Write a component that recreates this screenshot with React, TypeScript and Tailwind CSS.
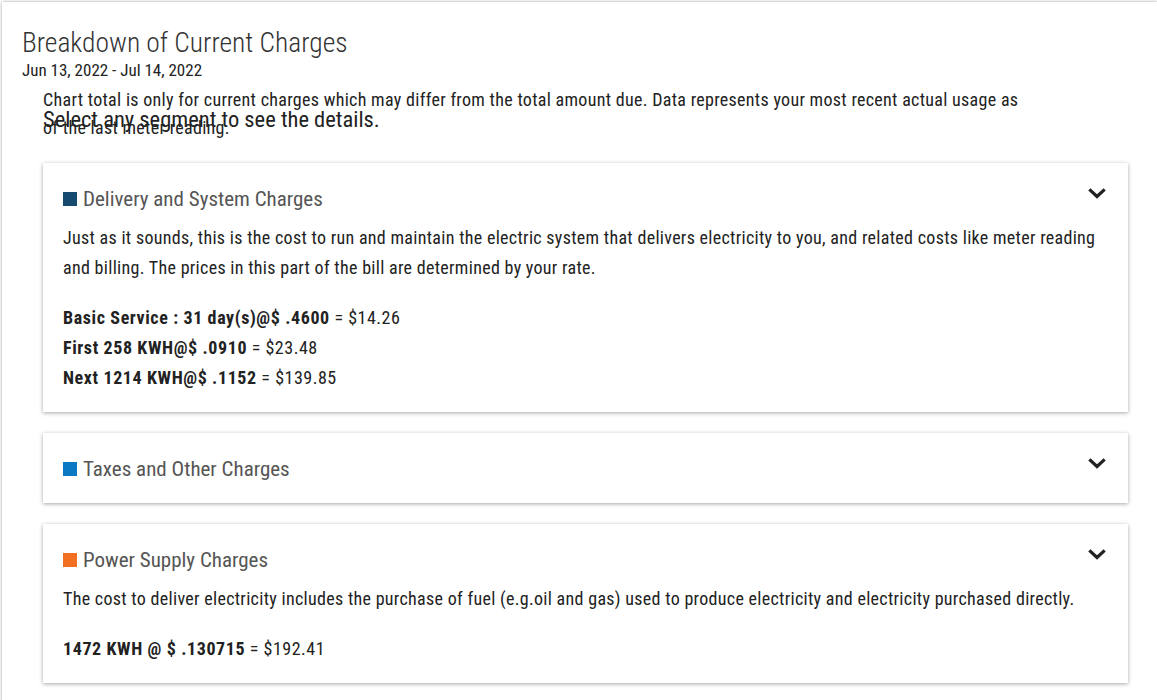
import React from "react";

type Charge = { bold: string; rest: string };

interface SectionProps {
  color: string;
  title: string;
  description?: string;
  charges?: Charge[];
}

const Chevron = () => (
  <svg width="18" height="12" viewBox="0 0 18 12" className="text-[#222]">
    <path d="M2.5 2.5 L9 8.5 L15.5 2.5" fill="none" stroke="currentColor" strokeWidth="3.2" strokeLinecap="square" />
  </svg>
);

const Section: React.FC<SectionProps> = ({ color, title, description, charges }) => (
  <div
    className={`bg-white shadow-[0_1px_4px_rgba(0,0,0,0.35)] px-5 pt-[22px] ${description ? "pb-[19px]" : "pb-[20px]"}`}
  >
    <div className="flex items-start justify-between">
      <div className="flex items-center gap-[6px] text-[21px] leading-[28px] text-[#555]">
        <span className={`inline-block w-[14px] h-[14px] ${color}`} />
        <span>{title}</span>
      </div>
      <div className="pt-[3px] pr-[2px]">
        <Chevron />
      </div>
    </div>
    {description && (
      <p className="mt-[10px] text-[18px] leading-[30px] tracking-[0.3px] text-[#222]">{description}</p>
    )}
    {charges && (
      <div className="mt-[20px] text-[18px] leading-[30px] tracking-[0.5px] text-[#222]">
        {charges.map((c) => (
          <div key={c.bold}>
            <span className="font-bold tracking-[0.6px]">{c.bold}</span> = {c.rest}
          </div>
        ))}
      </div>
    )}
  </div>
);

export default function App() {
  return (
    <div className="min-h-[700px] bg-white pt-[2px] pl-[2px] font-['Roboto_Condensed','Liberation_Sans',sans-serif]">
      <div className="bg-white shadow-[0_0_3px_rgba(0,0,0,0.4)] min-h-[700px] pl-5 pr-[29px] pt-[24px]">
        <h2 className="text-[27.5px] leading-[34px] font-light text-[#333]">Breakdown of Current Charges</h2>
        <div className="text-[17px] leading-[20px] text-[#222]">Jun 13, 2022 - Jul 14, 2022</div>
        <div className="pl-[21px]">
          <p className="mt-[6px] text-[18px] leading-[28px] tracking-[0.3px] text-[#222] pr-[100px]">
            Chart total is only for current charges which may differ from the total amount due. Data represents your most recent actual usage as of the last meter reading.
          </p>
          <div className="mt-[-36px] text-[22.5px] leading-[26px] text-[#222]">Select any segment to see the details.</div>
          <div className="mt-[31px] flex flex-col gap-[21px]">
            <Section
              color="bg-[#174a6f]"
              title="Delivery and System Charges"
              description="Just as it sounds, this is the cost to run and maintain the electric system that delivers electricity to you, and related costs like meter reading and billing. The prices in this part of the bill are determined by your rate."
              charges={[
                { bold: "Basic Service : 31 day(s)@$ .4600", rest: "$14.26" },
                { bold: "First 258 KWH@$ .0910", rest: "$23.48" },
                { bold: "Next 1214 KWH@$ .1152", rest: "$139.85" },
              ]}
            />
            <Section color="bg-[#0a78c2]" title="Taxes and Other Charges" />
            <Section
              color="bg-[#f37021]"
              title="Power Supply Charges"
              description="The cost to deliver electricity includes the purchase of fuel (e.g.oil and gas) used to produce electricity and electricity purchased directly."
              charges={[{ bold: "1472 KWH @ $ .130715", rest: "$192.41" }]}
            />
          </div>
        </div>
      </div>
    </div>
  );
}
